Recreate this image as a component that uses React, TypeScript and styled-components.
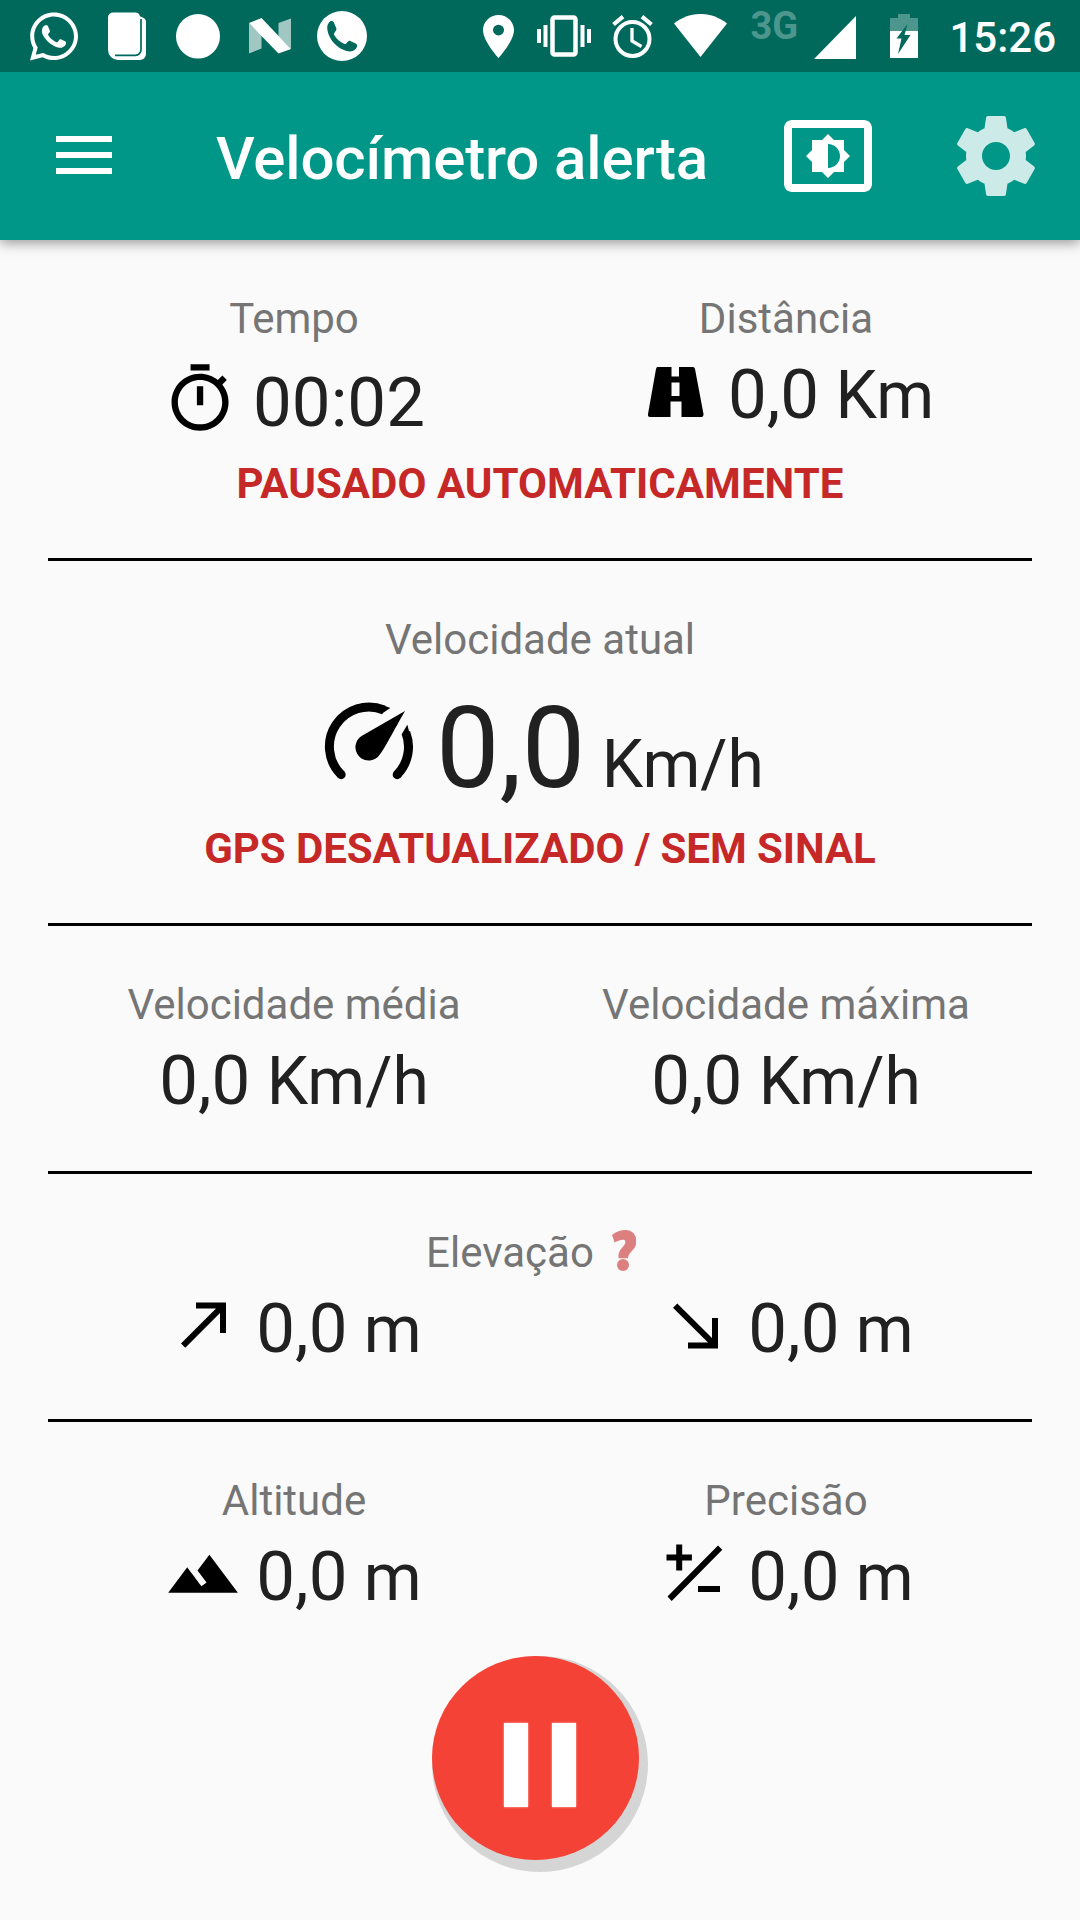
import React from "react";
import styled, { createGlobalStyle } from "styled-components";
import { FaWhatsapp } from "react-icons/fa";

const GlobalStyle = createGlobalStyle`
  * { box-sizing: border-box; }
  body { margin: 0; background: #fafafa; font-family: Roboto, "Noto Sans", sans-serif; }
`;

const Screen = styled.div`
  width: 1080px;
  height: 1920px;
  display: flex;
  flex-direction: column;
  background: #fafafa;
  overflow: hidden;
`;

const StatusBar = styled.header`
  position: relative;
  z-index: 1;
  height: 72px;
  flex: none;
  display: flex;
  justify-content: space-between;
  padding: 0 24px 0 30px;
  background: #00695c;
  color: #fff;
`;

const StatusGroup = styled.div`
  display: flex;
  align-items: flex-start;
`;

const StatusIcon = styled.svg<{ $top: number; $gap?: number }>`
  flex: none;
  display: block;
  margin-top: ${(p) => p.$top}px;
  margin-left: ${(p) => p.$gap ?? 0}px;
`;

const WhatsappIcon = styled(FaWhatsapp)`
  display: block;
  flex: none;
  width: 48px;
  height: 55px;
  margin-top: 9px;
`;

const Network = styled.span`
  width: 47px;
  margin: 3px 0 0 23px;
  font-size: 38px;
  line-height: 46px;
  font-weight: 700;
  white-space: nowrap;
  color: #4d968d;
`;

const Clock = styled.span`
  margin: 12px 0 0 31px;
  font-size: 42px;
  line-height: 52px;
  font-weight: 500;
`;

const AppBar = styled.nav`
  height: 168px;
  flex: none;
  display: flex;
  align-items: center;
  padding: 0 36px 0 56px;
  background: #009688;
  box-shadow: 0 3px 12px rgba(0, 0, 0, 0.4);
  color: #fff;
`;

const MenuButton = styled.button`
  display: flex;
  flex-direction: column;
  gap: 10px;
  width: 56px;
  padding: 0;
  margin-top: -2px;
  border: 0;
  background: none;
`;

const MenuLine = styled.span`
  height: 6px;
  background: #fff;
`;

const Title = styled.h1`
  flex: 1;
  margin: 6px 0 0 104px;
  font-size: 60px;
  line-height: 72px;
  font-weight: 500;
  letter-spacing: -0.14px;
  white-space: nowrap;
`;

const ActionIcon = styled.svg<{ $gap?: number; $opacity?: number }>`
  flex: none;
  width: 96px;
  height: 96px;
  margin-left: ${(p) => p.$gap ?? 0}px;
  fill: #fff;
  opacity: ${(p) => p.$opacity ?? 1};
`;

const Content = styled.main`
  flex: 1;
  display: flex;
  flex-direction: column;
  padding: 0 48px;
`;

const Section = styled.section<{ $height: number; $last?: boolean }>`
  flex: none;
  height: ${(p) => p.$height}px;
  padding-top: 54px;
  border-bottom: ${(p) => (p.$last ? "0" : "3px solid #000")};
`;

const Columns = styled.div`
  display: grid;
  grid-template-columns: 1fr 1fr;
`;

const Label = styled.div`
  display: flex;
  justify-content: center;
  height: 50px;
  font-size: 42px;
  line-height: 50px;
  color: #757575;
  white-space: nowrap;
`;

const ValueRow = styled.div<{ $top?: number }>`
  display: flex;
  justify-content: center;
  align-items: flex-start;
  gap: 14px;
  height: 77px;
  margin-top: ${(p) => p.$top ?? 13}px;
`;

const Value = styled.span<{ $shift?: number }>`
  margin-top: ${(p) => p.$shift ?? 0}px;
  font-size: 66px;
  line-height: 78px;
  color: #212121;
  white-space: pre;
`;

const Digits = styled.span<{ $size?: number }>`
  font-size: ${(p) => p.$size ?? 69}px;
  line-height: 1px;
`;

const ValueIcon = styled.svg<{ $shift?: number }>`
  flex: none;
  display: block;
  width: 76px;
  height: 76px;
  margin-top: ${(p) => p.$shift ?? -3}px;
  overflow: visible;
`;

const GaugeIcon = styled.svg`
  flex: none;
  width: 106px;
  height: 100px;
  margin: -32px 0 0;
  overflow: visible;
`;

const Warning = styled.div<{ $top: number; $tracking: number }>`
  margin-top: ${(p) => p.$top}px;
  font-size: 42px;
  line-height: 50px;
  font-weight: 700;
  letter-spacing: ${(p) => p.$tracking}px;
  text-align: center;
  color: #c62828;
  white-space: nowrap;
`;

const HelpIcon = styled.svg`
  flex: none;
  width: 24px;
  height: 41px;
  margin: 2px 18px 0 18px;
  fill: #dc7f7f;
`;

const FabShadow = styled.div`
  width: 216px;
  height: 216px;
  flex: none;
  margin: 16px 0 0 384px;
  border-radius: 50%;
  background: #d5d5d5;
`;

const Fab = styled.button`
  display: flex;
  gap: 24px;
  width: 207px;
  height: 204px;
  padding: 67px 0 0 72px;
  border: 0;
  border-radius: 50%;
  background: #f44336;
`;

const PauseBar = styled.span`
  width: 24px;
  height: 84px;
  background: #fff;
  box-shadow: 0 0 2px rgba(255, 255, 255, 0.7);
`;

function Status() {
  return (
    <StatusBar>
      <StatusGroup>
        <WhatsappIcon />
        <StatusIcon $top={12} $gap={30} width="38" height="48" viewBox="0 0 38 48" fill="#fff">
          <path d="M5 .5h22a5 5 0 0 1 5 4c3 .5 6 2.500 6 5V42a6 6 0 0 1-6 6H10A10 10 0 0 1 0 38V5.500a5 5 0 0 1 5-5z" />
          <path d="M7 43.300h20.500a5.500 5.500 0 0 0 5.500-5.500V7" fill="none" stroke="#00695c" strokeWidth="1.700" />
        </StatusIcon>
        <StatusIcon $top={14} $gap={30} width="44" height="45" viewBox="0 0 44 45">
          <ellipse cx="22" cy="22.300" rx="22" ry="22.300" fill="#fff" />
        </StatusIcon>
        <StatusIcon $top={18} $gap={29} width="42" height="36" viewBox="0 0 42 36" fill="#fff">
          <path d="M0 5l12.500 12v13.500L0 35.500zM29.500 5L42 .5V31L29.500 18z" opacity=".63" />
          <path d="M0 5L12.500 0 42 31l-12.500 4.500z" />
        </StatusIcon>
        <StatusIcon $top={11} $gap={26} width="50" height="50" viewBox="0 0 50 50">
          <circle cx="25" cy="25" r="25" fill="#fff" />
          <path
            d="M12 11.500c1.500-1.800 3.700-2 4.800-.2l2.500 6c.5 1.500-.2 2.500-1.800 4.400-.8 1-.6 1.700 0 2.700 2.500 4 5.800 6.600 9.500 8.300 1.100.5 1.800.4 2.600-.6 1.900-2.300 2.300-2.700 3.800-2.200l5.700 2.900c1.600.8 1.100 3.300 0 4.700-2 2.500-5.600 3.500-9.500 2.500-9-2.300-17.300-11-19-20-.7-3.600-.5-6.500 1.400-8.500z"
            fill="#00695c"
          />
        </StatusIcon>
      </StatusGroup>
      <StatusGroup>
        <StatusIcon $top={15} width="31" height="43" viewBox="5 2 14 20" preserveAspectRatio="none" fill="#fff">
          <path d="M12 2C8.130 2 5 5.130 5 9c0 5.250 7 13 7 13s7-7.750 7-13c0-3.870-3.130-7-7-7zm0 9.500a2.500 2.500 0 0 1 0-5 2.500 2.500 0 0 1 0 5z" />
        </StatusIcon>
        <StatusIcon $top={15} $gap={23} width="54" height="42" viewBox="0 0 54 42" fill="#fff">
          <rect x="15.500" y="2.500" width="23" height="37" rx="2" fill="none" stroke="#fff" strokeWidth="4.500" />
          <path d="M0 14h4v14H0zM6.500 10h4v22h-4zM43.500 10h4v22h-4zM50 14h4v14h-4z" />
        </StatusIcon>
        <StatusIcon $top={15} $gap={21} width="41" height="43" viewBox="0 0 41 43" fill="none" stroke="#fff">
          <circle cx="20.500" cy="24" r="17" strokeWidth="4" />
          <path d="M1.500 9.500L11 1.700M30 1.700l9.500 7.800" strokeWidth="4.200" />
          <path d="M20 13v13l9.500 5.500" strokeWidth="3.300" />
        </StatusIcon>
        <StatusIcon $top={14} $gap={21} width="53" height="43" viewBox="0 0 53 43" fill="#fff">
          <path d="M0 9.500C16-3.200 37-3.200 53 9.500L26.500 43z" />
        </StatusIcon>
        <Network>3G</Network>
        <StatusIcon $top={16} $gap={17} width="42" height="43" viewBox="0 0 42 43" fill="#fff">
          <path d="M42 0v43H0z" />
        </StatusIcon>
        <StatusIcon $top={14} $gap={34} width="28" height="44" viewBox="0 0 28 44">
          <path d="M8 0h12v4h8v13H0V4h8z" fill="#4d968d" />
          <path d="M0 17h28v27H0z" fill="#fff" />
          <path d="M17.500 10L6.500 24.500h5L8 40l12.500-19h-6z" fill="#00695c" />
        </StatusIcon>
        <Clock>15:26</Clock>
      </StatusGroup>
    </StatusBar>
  );
}

function Toolbar() {
  return (
    <AppBar>
      <MenuButton aria-label="Menu">
        <MenuLine />
        <MenuLine />
        <MenuLine />
      </MenuButton>
      <Title>Velocímetro alerta</Title>
      <ActionIcon viewBox="0 0 24 24">
        <path d="M21 3H3c-1.100 0-2 .9-2 2v14c0 1.100.9 2 2 2h18c1.100 0 2-.9 2-2V5c0-1.100-.9-2-2-2zm0 16.010H3V4.990h18v14.020zM8 16h2.500l1.500 1.500 1.500-1.500H16v-2.500l1.500-1.500-1.500-1.500V8h-2.500L12 6.500 10.500 8H8v2.500L6.500 12 8 13.500V16zm4-7c1.660 0 3 1.340 3 3s-1.340 3-3 3V9z" />
      </ActionIcon>
      <ActionIcon viewBox="0 0 24 24" $gap={72} $opacity={0.8}>
        <path d="M19.430 12.980c.04-.32.07-.64.07-.98s-.03-.66-.07-.98l2.110-1.650c.19-.15.24-.42.12-.64l-2-3.460c-.12-.22-.39-.3-.61-.22l-2.490 1c-.52-.4-1.080-.73-1.690-.98l-.38-2.650C14.460 2.180 14.250 2 14 2h-4c-.25 0-.46.18-.49.42l-.38 2.650c-.61.25-1.170.59-1.690.98l-2.490-1c-.23-.09-.49 0-.61.22l-2 3.460c-.13.22-.07.49.12.64l2.110 1.650c-.04.32-.07.65-.07.98s.03.66.07.98l-2.110 1.650c-.19.15-.24.42-.12.64l2 3.460c.12.22.39.3.61.22l2.490-1c.52.4 1.080.73 1.690.98l.38 2.650c.03.24.24.42.49.42h4c.25 0 .46-.18.49-.42l.38-2.650c.61-.25 1.170-.59 1.690-.98l2.490 1c.23.09.49 0 .61-.22l2-3.460c.12-.22.07-.49-.12-.64l-2.110-1.650zM12 15.500c-1.930 0-3.500-1.570-3.500-3.500s1.570-3.500 3.500-3.500 3.500 1.570 3.500 3.500-1.570 3.500-3.500 3.500z" />
      </ActionIcon>
    </AppBar>
  );
}

const TimerIcon = () => (
  <ValueIcon viewBox="0.3 0 24 24" $shift={4}>
    <path d="M15 1H9v2h6V1zm-4 13h2V8h-2v6zm8.030-6.610l1.420-1.420c-.43-.51-.9-.99-1.410-1.410l-1.420 1.420C16.070 4.740 14.120 4 12 4c-4.970 0-9 4.030-9 9s4.020 9 9 9 9-4.030 9-9c0-2.120-.74-4.070-1.970-5.610zM12 20c-3.870 0-7-3.130-7-7s3.130-7 7-7 7 3.130 7 7-3.130 7-7 7z" />
  </ValueIcon>
);

const RoadIcon = () => (
  <ValueIcon viewBox="1 0 76 76" $shift={-1}>
    <path
      fillRule="evenodd"
      d="M20.500 11H34.500V20.500H42V11H56Q57.500 11 58 13L66.500 58Q66.500 61 64.500 61H44.500V45.500H33.500V61H13Q10.500 61 11 58L19 13Q19.500 11 20.500 11zM34.500 26.500V40H42.500V26.500z"
    />
  </ValueIcon>
);

const GaugeDrawing = () => (
  <GaugeIcon viewBox="-3 0 318 300">
    <g fill="none" stroke="#000" strokeWidth="27">
      <path d="M72.500 242A118.500 118.500 0 0 1 200.700 48" />
      <path d="M266.500 116A118.500 118.500 0 0 1 240.500 242" />
    </g>
    <circle cx="72.500" cy="242" r="13.500" />
    <circle cx="240.500" cy="242" r="13.500" />
    <path d="M196 33L220 42L192 61z" />
    <path d="M271 92L254 121L279 122z" />
    <path d="M264 51L135 125A40 40 0 1 0 189 181C199 170 232 107 264 51z" />
  </GaugeIcon>
);

export default function App() {
  return (
    <>
      <GlobalStyle />
      <Screen>
        <Status />
        <Toolbar />
        <Content>
          <Section $height={321}>
            <Columns>
              <div>
                <Label>Tempo</Label>
                <ValueRow>
                  <TimerIcon />
                  <Value $shift={8}>
                    <Digits>00:02</Digits>
                  </Value>
                </ValueRow>
              </div>
              <div>
                <Label>Distância</Label>
                <ValueRow>
                  <RoadIcon />
                  <Value>
                    <Digits>0,0</Digits> Km
                  </Value>
                </ValueRow>
              </div>
            </Columns>
            <Warning $top={25} $tracking={0.04}>
              PAUSADO AUTOMATICAMENTE
            </Warning>
          </Section>

          <Section $height={365}>
            <Label>Velocidade atual</Label>
            <ValueRow $top={61}>
              <GaugeDrawing />
              <Value>
                <Digits $size={113}>0,0</Digits> Km/h
              </Value>
            </ValueRow>
            <Warning $top={21} $tracking={-0.07}>
              GPS DESATUALIZADO / SEM SINAL
            </Warning>
          </Section>

          <Section $height={248}>
            <Columns>
              <div>
                <Label>Velocidade média</Label>
                <ValueRow>
                  <Value>
                    <Digits>0,0</Digits> Km/h
                  </Value>
                </ValueRow>
              </div>
              <div>
                <Label>Velocidade máxima</Label>
                <ValueRow>
                  <Value>
                    <Digits>0,0</Digits> Km/h
                  </Value>
                </ValueRow>
              </div>
            </Columns>
          </Section>

          <Section $height={248}>
            <Label>
              Elevação
              <HelpIcon viewBox="0 0 72 122" preserveAspectRatio="none">
                <path d="M0 15C12 4 27 0 40 0C60 0 73 13 73 33C73 62 50 62 48 84H20C15 58 40 50 40 35C40 26 25 28 8 37z" />
                <circle cx="33" cy="104" r="18" />
              </HelpIcon>
            </Label>
            <Columns>
              <ValueRow>
                <ValueIcon viewBox="0 0 76 76">
                  <path d="M30 14.500v6h20L15 55.500l4.300 4.300L54 25v20h6V14.500z" />
                </ValueIcon>
                <Value>
                  <Digits>0,0</Digits> m
                </Value>
              </ValueRow>
              <ValueRow>
                <ValueIcon viewBox="0 0 76 76">
                  <path d="M60 30h-6v20L19.300 15.500 15 19.800 50 54.500H30v6h30z" />
                </ValueIcon>
                <Value>
                  <Digits>0,0</Digits> m
                </Value>
              </ValueRow>
            </Columns>
          </Section>

          <Section $height={218} $last>
            <Columns>
              <div>
                <Label>Altitude</Label>
                <ValueRow>
                  <ValueIcon viewBox="0.3 0.1 24 24">
                    <path d="M14 6l-3.750 5 2.850 3.800-1.600 1.200C9.810 13.750 7 10 7 10l-6 8h22L14 6z" />
                  </ValueIcon>
                  <Value>
                    <Digits>0,0</Digits> m
                  </Value>
                </ValueRow>
              </div>
              <div>
                <Label>Precisão</Label>
                <ValueRow>
                  <ValueIcon viewBox="0 0 76 76">
                    <path d="M8.500 18.500h9.700V8.500h6v10h9.700v6h-9.700v10h-6v-10H8.500zM40 50h22v6H40zM9.500 60.500L60 9.500l4.300 4.300L13.700 65z" />
                  </ValueIcon>
                  <Value>
                    <Digits>0,0</Digits> m
                  </Value>
                </ValueRow>
              </div>
            </Columns>
          </Section>

          <FabShadow>
            <Fab aria-label="Pausar">
              <PauseBar />
              <PauseBar />
            </Fab>
          </FabShadow>
        </Content>
      </Screen>
    </>
  );
}
